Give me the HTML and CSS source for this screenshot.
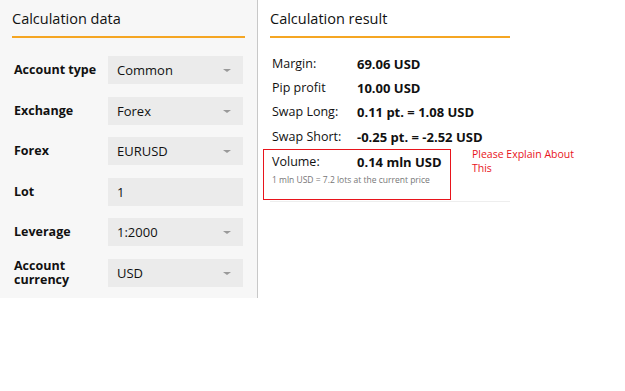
FILE: index.html
```html
<!DOCTYPE html>
<html lang="en">
<head>
    <meta charset="UTF-8">
    <title>Calculator</title>
    <link rel="stylesheet" href="styles.css">
</head>
<body>
  <div class="calc">
    <!-- input side -->
    <div class="data">
      <h3>Calculation data</h3>
      <div class="row">
        <label>Account type</label>
        <div class="field">Common<span class="arrow"></span></div>
      </div>
      <div class="row">
        <label>Exchange</label>
        <div class="field">Forex<span class="arrow"></span></div>
      </div>
      <div class="row">
        <label>Forex</label>
        <div class="field">EURUSD<span class="arrow"></span></div>
      </div>
      <div class="row">
        <label>Lot</label>
        <div class="field">1</div>
      </div>
      <div class="row">
        <label>Leverage</label>
        <div class="field">1:2000<span class="arrow"></span></div>
      </div>
      <div class="row">
        <label>Account<br>currency</label>
        <div class="field">USD<span class="arrow"></span></div>
      </div>
    </div>

    <!-- result side -->
    <div class="result">
      <h3>Calculation result</h3>
      <div class="res"><span>Margin:</span><b>69.06 USD</b></div>
      <div class="res"><span>Pip profit</span><b>10.00 USD</b></div>
      <div class="res"><span>Swap Long:</span><b>0.11 pt. = 1.08 USD</b></div>
      <div class="res"><span>Swap Short:</span><b>-0.25 pt. = -2.52 USD</b></div>
      <div class="volume">
        <div class="res"><span>Volume:</span><b>0.14 mln USD</b></div>
        <p class="note">1 mln USD = 7.2 lots at the current price</p>
      </div>
    </div>

    <p class="ask">Please Explain About<br>This</p>
  </div>
</body>
</html>
```

FILE: styles.css
```css
* {
  margin: 0;
  padding: 0;
  box-sizing: border-box;
}

body {
  background: white;
  font-family: "Open Sans", "DejaVu Sans", sans-serif;
  color: #111;
}

.calc {
  display: flex;
  align-items: flex-start;
}

h3 {
  font-weight: normal;
  font-size: 14.5px;
  line-height: 20px;
  padding: 9px 0 7px 0;
  border-bottom: 2px solid #f5a623;
}

.data {
  width: 258px;
  height: 298px;
  background: #f7f7f7;
  border-right: 1px solid #c8c8c8;
  padding: 0 12px;
}

.data h3 {
  margin-bottom: 18px;
}

.row {
  display: flex;
  align-items: center;
  height: 28px;
  margin-bottom: 12.6px;
}

.row label {
  width: 96px;
  padding-left: 2px;
  font-weight: bold;
  font-size: 12.5px;
  line-height: 14px;
}

.field {
  position: relative;
  width: 135px;
  height: 28px;
  background: #ebebeb;
  font-size: 13px;
  line-height: 28px;
  padding-left: 9px;
}

.arrow {
  position: absolute;
  right: 12px;
  top: 13px;
  border-left: 4px solid transparent;
  border-right: 4px solid transparent;
  border-top: 3px solid #999;
}

.result {
  width: 240px;
  margin-left: 12px;
  border-bottom: 1px solid #eee;
}

.result h3 {
  margin-bottom: 14px;
}

.res {
  display: flex;
  font-size: 12.5px;
  line-height: 24.2px;
  padding-left: 2px;
}

.res span {
  width: 85px;
}

.res b {
  font-size: 13px;
}

.volume {
  border: 1px solid #e8141c;
  width: 188px;
  margin-left: -7px;
  padding: 0 0 13px 8px;
  margin-bottom: 1px;
}

.volume .res {
  padding-left: 0;
}

.note {
  font-size: 8.5px;
  color: #777;
  line-height: 12px;
}

.ask {
  color: #e8141c;
  font-size: 10.5px;
  line-height: 14px;
  margin: 147px 0 0 -38px;
}
```
